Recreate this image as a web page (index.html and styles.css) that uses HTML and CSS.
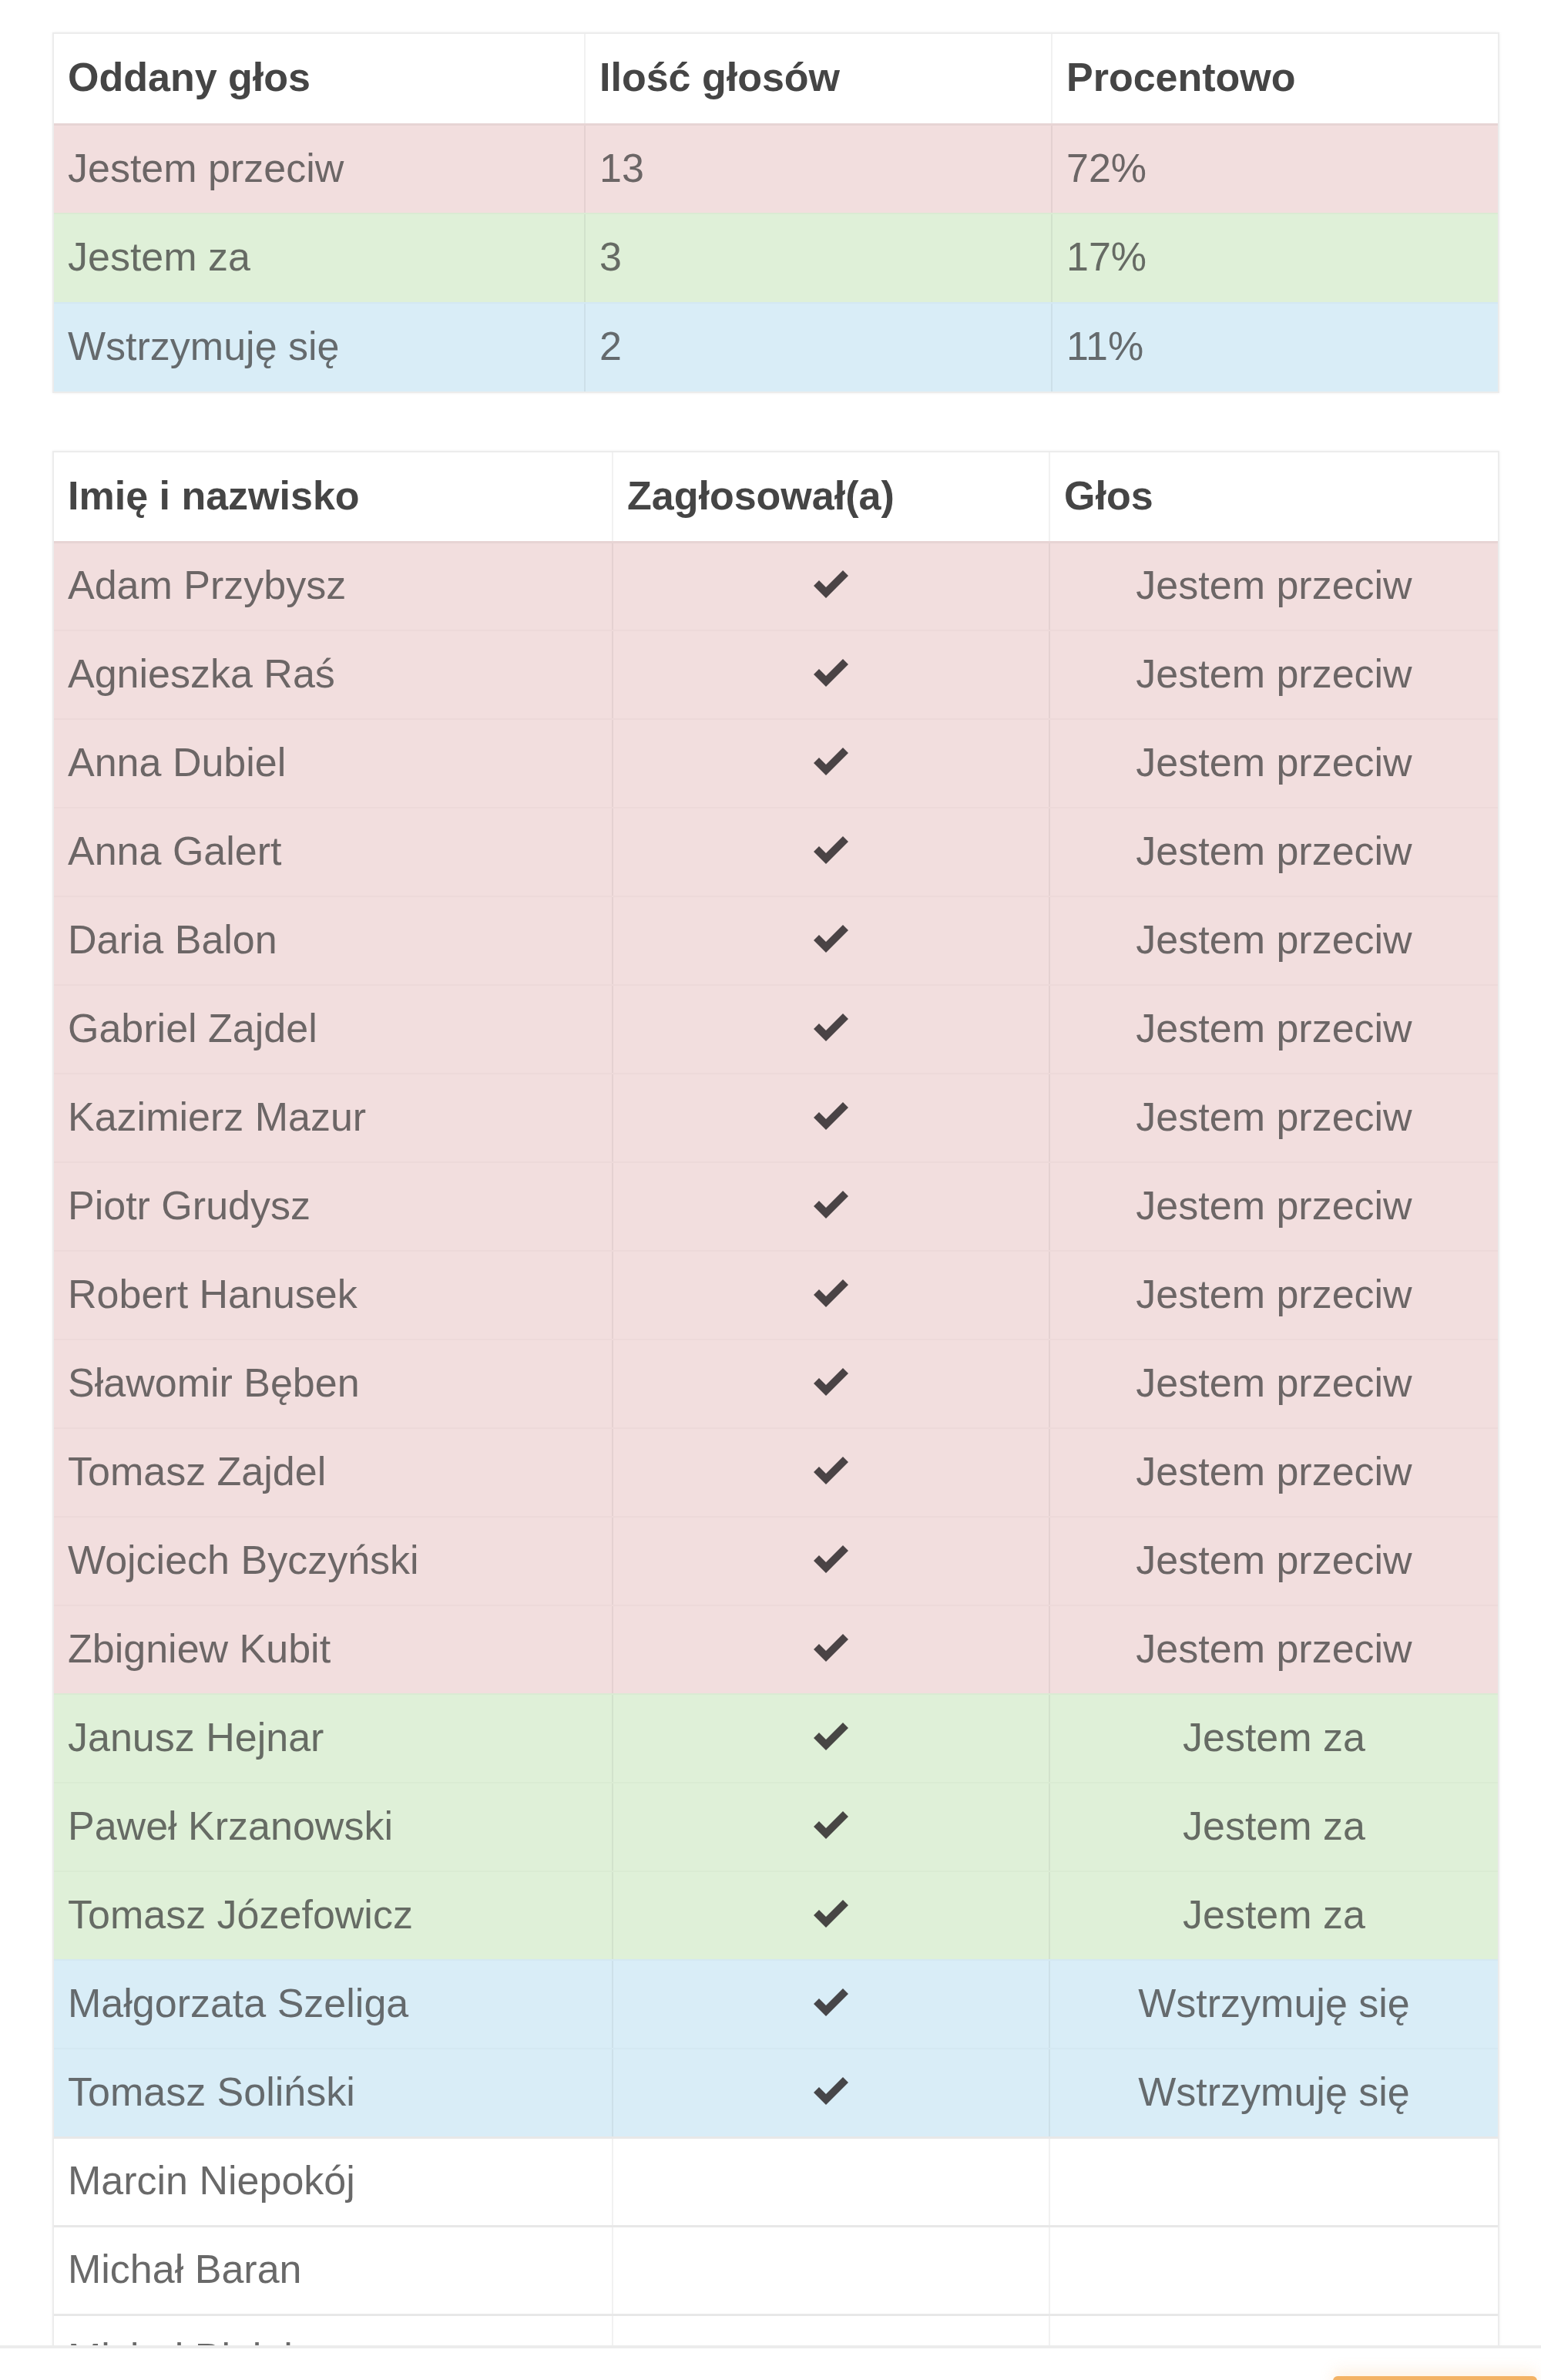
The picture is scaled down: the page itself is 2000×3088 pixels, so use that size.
FILE: index.html
```html
<!DOCTYPE html>
<html lang="pl">
<head>
<meta charset="utf-8">
<title>Wyniki głosowania</title>
<link rel="stylesheet" href="styles.css">
</head>
<body>
<main class="page">
  <section class="grid summary">
    <div class="row head">
      <div class="cell">Oddany głos</div>
      <div class="cell">Ilość głosów</div>
      <div class="cell">Procentowo</div>
    </div>
    <div class="row danger">
      <div class="cell">Jestem przeciw</div>
      <div class="cell">13</div>
      <div class="cell">72%</div>
    </div>
    <div class="row success">
      <div class="cell">Jestem za</div>
      <div class="cell">3</div>
      <div class="cell">17%</div>
    </div>
    <div class="row info">
      <div class="cell">Wstrzymuję się</div>
      <div class="cell">2</div>
      <div class="cell">11%</div>
    </div>
  </section>

  <section class="grid voters">
    <div class="row head">
      <div class="cell">Imię i nazwisko</div>
      <div class="cell">Zagłosował(a)</div>
      <div class="cell">Głos</div>
    </div>
    <div class="row danger"><div class="cell">Adam Przybysz</div><div class="cell center"><svg class="ok" viewBox="0 0 46 38"><path d="M0 20 L7 13 L16 22 L38 0 L45 7 L16 36 Z"/></svg></div><div class="cell center">Jestem przeciw</div></div>
    <div class="row danger"><div class="cell">Agnieszka Raś</div><div class="cell center"><svg class="ok" viewBox="0 0 46 38"><path d="M0 20 L7 13 L16 22 L38 0 L45 7 L16 36 Z"/></svg></div><div class="cell center">Jestem przeciw</div></div>
    <div class="row danger"><div class="cell">Anna Dubiel</div><div class="cell center"><svg class="ok" viewBox="0 0 46 38"><path d="M0 20 L7 13 L16 22 L38 0 L45 7 L16 36 Z"/></svg></div><div class="cell center">Jestem przeciw</div></div>
    <div class="row danger"><div class="cell">Anna Galert</div><div class="cell center"><svg class="ok" viewBox="0 0 46 38"><path d="M0 20 L7 13 L16 22 L38 0 L45 7 L16 36 Z"/></svg></div><div class="cell center">Jestem przeciw</div></div>
    <div class="row danger"><div class="cell">Daria Balon</div><div class="cell center"><svg class="ok" viewBox="0 0 46 38"><path d="M0 20 L7 13 L16 22 L38 0 L45 7 L16 36 Z"/></svg></div><div class="cell center">Jestem przeciw</div></div>
    <div class="row danger"><div class="cell">Gabriel Zajdel</div><div class="cell center"><svg class="ok" viewBox="0 0 46 38"><path d="M0 20 L7 13 L16 22 L38 0 L45 7 L16 36 Z"/></svg></div><div class="cell center">Jestem przeciw</div></div>
    <div class="row danger"><div class="cell">Kazimierz Mazur</div><div class="cell center"><svg class="ok" viewBox="0 0 46 38"><path d="M0 20 L7 13 L16 22 L38 0 L45 7 L16 36 Z"/></svg></div><div class="cell center">Jestem przeciw</div></div>
    <div class="row danger"><div class="cell">Piotr Grudysz</div><div class="cell center"><svg class="ok" viewBox="0 0 46 38"><path d="M0 20 L7 13 L16 22 L38 0 L45 7 L16 36 Z"/></svg></div><div class="cell center">Jestem przeciw</div></div>
    <div class="row danger"><div class="cell">Robert Hanusek</div><div class="cell center"><svg class="ok" viewBox="0 0 46 38"><path d="M0 20 L7 13 L16 22 L38 0 L45 7 L16 36 Z"/></svg></div><div class="cell center">Jestem przeciw</div></div>
    <div class="row danger"><div class="cell">Sławomir Bęben</div><div class="cell center"><svg class="ok" viewBox="0 0 46 38"><path d="M0 20 L7 13 L16 22 L38 0 L45 7 L16 36 Z"/></svg></div><div class="cell center">Jestem przeciw</div></div>
    <div class="row danger"><div class="cell">Tomasz Zajdel</div><div class="cell center"><svg class="ok" viewBox="0 0 46 38"><path d="M0 20 L7 13 L16 22 L38 0 L45 7 L16 36 Z"/></svg></div><div class="cell center">Jestem przeciw</div></div>
    <div class="row danger"><div class="cell">Wojciech Byczyński</div><div class="cell center"><svg class="ok" viewBox="0 0 46 38"><path d="M0 20 L7 13 L16 22 L38 0 L45 7 L16 36 Z"/></svg></div><div class="cell center">Jestem przeciw</div></div>
    <div class="row danger"><div class="cell">Zbigniew Kubit</div><div class="cell center"><svg class="ok" viewBox="0 0 46 38"><path d="M0 20 L7 13 L16 22 L38 0 L45 7 L16 36 Z"/></svg></div><div class="cell center">Jestem przeciw</div></div>
    <div class="row success"><div class="cell">Janusz Hejnar</div><div class="cell center"><svg class="ok" viewBox="0 0 46 38"><path d="M0 20 L7 13 L16 22 L38 0 L45 7 L16 36 Z"/></svg></div><div class="cell center">Jestem za</div></div>
    <div class="row success"><div class="cell">Paweł Krzanowski</div><div class="cell center"><svg class="ok" viewBox="0 0 46 38"><path d="M0 20 L7 13 L16 22 L38 0 L45 7 L16 36 Z"/></svg></div><div class="cell center">Jestem za</div></div>
    <div class="row success"><div class="cell">Tomasz Józefowicz</div><div class="cell center"><svg class="ok" viewBox="0 0 46 38"><path d="M0 20 L7 13 L16 22 L38 0 L45 7 L16 36 Z"/></svg></div><div class="cell center">Jestem za</div></div>
    <div class="row info"><div class="cell">Małgorzata Szeliga</div><div class="cell center"><svg class="ok" viewBox="0 0 46 38"><path d="M0 20 L7 13 L16 22 L38 0 L45 7 L16 36 Z"/></svg></div><div class="cell center">Wstrzymuję się</div></div>
    <div class="row info"><div class="cell">Tomasz Soliński</div><div class="cell center"><svg class="ok" viewBox="0 0 46 38"><path d="M0 20 L7 13 L16 22 L38 0 L45 7 L16 36 Z"/></svg></div><div class="cell center">Wstrzymuję się</div></div>
    <div class="row plain"><div class="cell">Marcin Niepokój</div><div class="cell"></div><div class="cell"></div></div>
    <div class="row plain"><div class="cell">Michał Baran</div><div class="cell"></div><div class="cell"></div></div>
    <div class="row plain"><div class="cell">Michał Białek</div><div class="cell"></div><div class="cell"></div></div>
  </section>
</main>

<footer class="bottom-bar">
  <div class="action-btn"></div>
</footer>
</body>
</html>
```

FILE: styles.css
```css
html, body {
  margin: 0;
  padding: 0;
  background: #ffffff;
  overflow: hidden;
}

body {
  font-family: "Liberation Sans", Arial, sans-serif;
  font-size: 52px;
  color: rgba(55, 55, 55, 0.72);
}

.page {
  padding: 42px 54px 0 68px;
}

.grid {
  width: 1878px;
  box-sizing: border-box;
  border: 2px solid #ececec;
  box-shadow: 0 0 4px rgba(0, 0, 0, 0.06);
  background: #ffffff;
}

.summary .row {
  grid-template-columns: 688px 606px 1fr;
  height: 116px;
}

.voters {
  margin-top: 75px;
}

.voters .row {
  grid-template-columns: 724px 567px 1fr;
  height: 115px;
}

.row {
  display: grid;
  box-sizing: border-box;
}

.row + .row {
  border-top: 2px solid rgba(0, 0, 0, 0.018);
}

.cell {
  display: flex;
  align-items: center;
  padding: 0 18px 4px;
  white-space: nowrap;
  overflow: hidden;
}

.cell + .cell {
  border-left: 2px solid rgba(0, 0, 0, 0.055);
}

.center {
  justify-content: center;
}

.head {
  background: #ffffff;
  font-weight: bold;
  color: #454545;
}

.row.head + .row {
  border-top: 3px solid rgba(0, 0, 0, 0.045);
}

.danger {
  background: #f2dede;
}

.success {
  background: #dff0d8;
}

.info {
  background: #d9edf7;
}

.plain {
  background: #ffffff;
  color: rgba(55, 55, 55, 0.75);
}

.row.plain {
  border-top: 3px solid #e8e8e8;
}

.ok {
  width: 46px;
  height: 38px;
  fill: rgba(45, 40, 42, 0.85);
}

.bottom-bar {
  position: fixed;
  left: 0;
  right: 0;
  bottom: 0;
  height: 41px;
  background: #ffffff;
  border-top: 4px solid #ececec;
}

.action-btn {
  position: absolute;
  left: 1730px;
  top: 36px;
  width: 265px;
  height: 30px;
  border-radius: 6px;
  background: #f3b264;
  box-shadow: 0 -8px 18px rgba(245, 185, 110, 0.18);
}
```
